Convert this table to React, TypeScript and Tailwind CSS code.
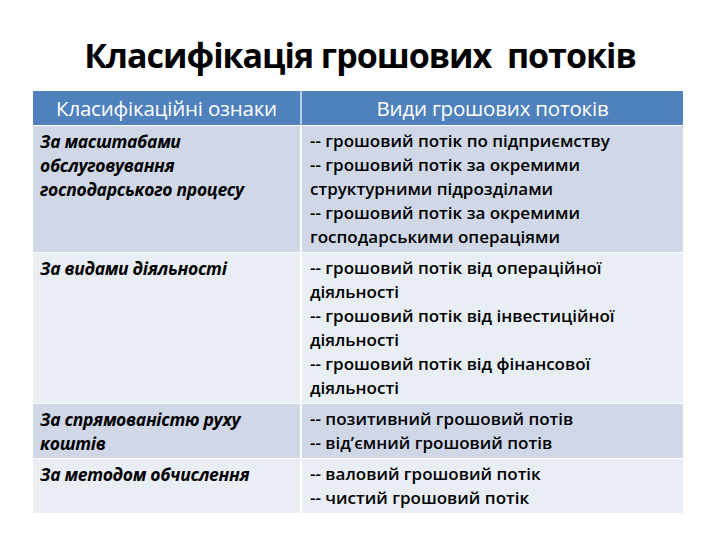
import React from "react";

const rows: { left: string[]; right: string[]; bg: string }[] = [
  {
    left: ["За масштабами", "обслуговування", "господарського процесу"],
    right: [
      "-- грошовий потік по підприємству",
      "-- грошовий потік за окремими",
      "структурними підрозділами",
      "-- грошовий потік за окремими",
      "господарськими операціями",
    ],
    bg: "bg-[#d0d8e8]",
  },
  {
    left: ["За видами діяльності"],
    right: [
      "-- грошовий потік від операційної",
      "діяльності",
      "-- грошовий потік від інвестиційної",
      "діяльності",
      "-- грошовий потік від фінансової",
      "діяльності",
    ],
    bg: "bg-[#e9edf4]",
  },
  {
    left: ["За спрямованістю руху", "коштів"],
    right: ["-- позитивний грошовий потів", "-- від’ємний грошовий потів"],
    bg: "bg-[#d0d8e8]",
  },
  {
    left: ["За методом обчислення"],
    right: ["-- валовий грошовий потік", "-- чистий грошовий потік"],
    bg: "bg-[#e9edf4]",
  },
];

export default function App() {
  return (
    <div className="w-[720px] h-[540px] bg-white flex flex-col items-center font-['Open_Sans',sans-serif] text-black">
      <h1 className="mt-[29px] h-[52px] flex items-center text-[34px] font-bold leading-none tracking-[-1px] whitespace-pre">
        Класифікація грошових  потоків
      </h1>
      <div className="mt-[10px] w-[650px] ml-[-4px] flex flex-col">
        <div className="flex h-[34px] bg-[#4f81bd] text-white text-[20.5px] tracking-[-0.2px]">
          <div className="w-[269px] flex items-center justify-center border-r-2 border-white/60">
            Класифікаційні ознаки
          </div>
          <div className="flex-1 flex items-center justify-center">Види грошових потоків</div>
        </div>
        {rows.map((r, i) => (
          <div key={i} className={`flex border-t border-white ${r.bg}`}>
            <div className="w-[269px] px-[7px] py-[3px] border-r-2 border-white font-bold italic text-[17.5px] leading-[24px] tracking-[-0.3px]">
              {r.left.map((l, j) => (
                <div key={j} className="whitespace-nowrap">{l}</div>
              ))}
            </div>
            <div className="flex-1 px-[8px] py-[3px] font-semibold text-[17px] leading-[24px]">
              {r.right.map((l, j) => (
                <div key={j} className="whitespace-nowrap">{l}</div>
              ))}
            </div>
          </div>
        ))}
      </div>
    </div>
  );
}
